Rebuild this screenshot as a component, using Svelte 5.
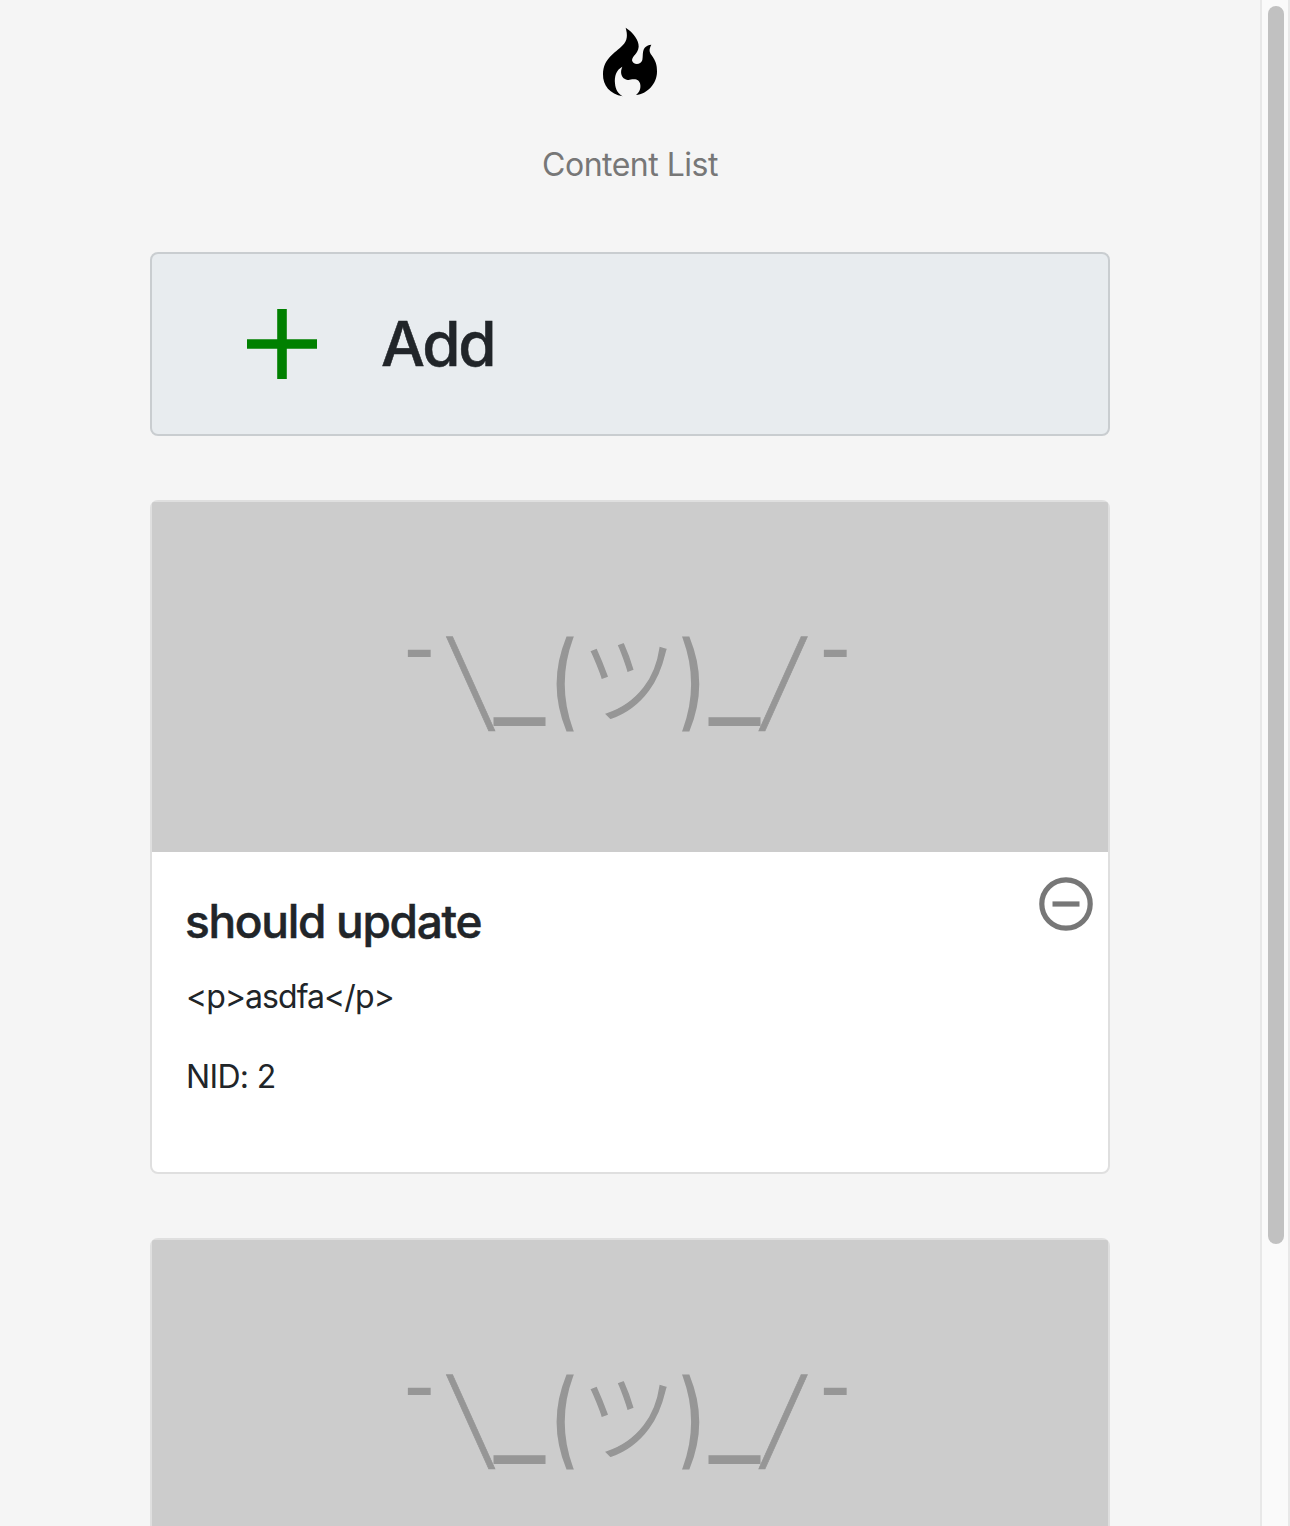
<script>
  const cards = [
    { title: 'should update', body: '<p>asdfa</p>', nid: 2 },
    {},
  ];

  // Each glyph of the placeholder: baseline origin, slant, scale and family class
  const glyphs = [
    { ch: '¯', x: 247.7, y: 221.8, skew: 0, sx: 0.78, sy: 1, face: 'sans' },
    { ch: '\\', x: 315, y: 218, skew: 13.9, sx: 0.75, sy: 1.14, face: 'sans slash' },
    { ch: '_', x: 342.5, y: 195, skew: 0, sx: 1, sy: 1.25, face: 'sans' },
    { ch: '(', x: 399.9, y: 214.5, skew: 0, sx: 0.65, sy: 1.035, face: 'sans heavy' },
    { ch: 'ツ', x: 428.3, y: 213.5, skew: 0, sx: 0.97, sy: 0.98, face: 'cjk' },
    { ch: ')', x: 526.6, y: 214.5, skew: 0, sx: 0.65, sy: 1.035, face: 'sans heavy' },
    { ch: '_', x: 557.5, y: 195, skew: 0, sx: 1, sy: 1.25, face: 'sans' },
    { ch: '/', x: 609.5, y: 218, skew: -13.9, sx: 0.75, sy: 1.14, face: 'sans slash' },
    { ch: '¯', x: 663.7, y: 221.8, skew: 0, sx: 0.78, sy: 1, face: 'sans' },
  ];
</script>

<div class="page">
  <main>
    <header>
      <svg class="flame" viewBox="0 0 240 255" aria-hidden="true">
        <path d="M107 23C130 37 147 61 146 80C144 102 127 106 126 121C128 135 152 137 157 120C161 104 152 78 184 74C176 90 178 96 185 106C198 125 201 135 201 155C201 190 172 222 138 225C150 215 152 205 151 195C150 182 140 177 130 178C122 178 115 183 105 177C93 171 90 155 97 140C78 150 73 170 75 190C76 208 85 222 98 229C60 224 38 195 39 163C40 115 75 100 98 76C113 60 113 45 107 23Z" />
      </svg>
      <p>Content List</p>
    </header>

    <button class="add">
      <svg viewBox="0 0 70 70" aria-hidden="true"><path d="M30.2 0h9.6v30.2H70v9.6H39.8V70h-9.6V39.8H0v-9.6h30.2z" /></svg>
      <span>Add</span>
    </button>

    {#each cards as card}
      <article>
        <svg class="placeholder" viewBox="0 0 956 350">
          <g class="shrug">
            {#each glyphs as g}
              <text class={g.face} transform="translate({g.x} {g.y}) skewX({g.skew}) scale({g.sx} {g.sy})">{g.ch}</text>
            {/each}
          </g>
        </svg>
        {#if card.title}
          <div class="body">
            <div class="copy">
              <h2>{card.title}</h2>
              <p class="markup">{card.body}</p>
              <p>NID: {card.nid}</p>
            </div>
            <svg class="remove" viewBox="0 0 54 54" aria-hidden="true">
              <circle cx="27" cy="27" r="24.2" />
              <path d="M13.5 27h27" />
            </svg>
          </div>
        {/if}
      </article>
    {/each}
  </main>
  <aside><div class="thumb"></div></aside>
</div>

<style>
  :global(body) { background: #f5f5f5; overflow: hidden; }
  .page {
    display: flex;
    height: 1526px;
    overflow: hidden;
    background: #f5f5f5;
    color: #212529;
    font-family: Inter, "Liberation Sans", sans-serif;
    font-size: 32px;
    line-height: 48px;
  }
  main {
    flex: 1;
    display: flex;
    flex-direction: column;
    align-items: center;
    gap: 64px;
  }
  main > * { flex-shrink: 0; box-sizing: border-box; width: 960px; }
  header {
    height: 188px;
    padding-top: 20px;
    display: flex;
    flex-direction: column;
    align-items: center;
    gap: 36px;
  }
  .flame { width: 80px; height: 85px; flex-shrink: 0; }
  header p { margin: 0; color: #777; letter-spacing: -0.5px; }
  .add {
    height: 184px;
    padding: 0 95px;
    display: flex;
    align-items: center;
    gap: 64px;
    border: 2px solid #c9cdd0;
    border-radius: 8px;
    background: #e8ecef;
    color: inherit;
    font: 500 62px/1 Inter, "Liberation Sans", sans-serif;
    letter-spacing: -2.3px;
    -webkit-text-stroke: 0.5px;
  }
  .add svg { width: 70px; height: 70px; fill: #008000; }
  article {
    height: 674px;
    border: 2px solid #dfdfdf;
    border-radius: 8px;
    background: #fff;
  }
  .placeholder {
    display: block;
    width: 956px;
    height: 350px;
    border-radius: 2px 2px 0 0;
    background: #ccc;
    fill: #969696;
    font-size: 100px;
  }
  .shrug { stroke: #969696; stroke-width: 0; filter: blur(0.6px); }
  .sans { font-family: "DejaVu Sans", sans-serif; }
  .heavy { stroke-width: 3px; }
  .slash { stroke-width: 1px; }
  .cjk { font-family: "Noto Sans CJK JP", sans-serif; font-weight: 300; stroke-width: 1.4px; }
  .body { display: flex; justify-content: space-between; padding: 25px 15px 0 34px; }
  .copy { padding-top: 16px; }
  h2 {
    margin: 0 0 24px -1px;
    font-size: 46px;
    line-height: 56px;
    font-weight: 500;
    letter-spacing: -1.3px;
    -webkit-text-stroke: 0.5px;
  }
  .copy p { margin: 0 0 32px; letter-spacing: -0.65px; }
  .copy .markup { letter-spacing: -0.95px; }
  .remove { width: 54px; height: 54px; fill: none; stroke: #777; stroke-width: 5.2; }
  aside {
    box-sizing: border-box;
    width: 30px;
    padding: 6px 4px 0 6px;
    border: solid #e8e8e8;
    border-width: 0 2px;
    background: #fafafa;
  }
  .thumb { width: 16px; height: 1238px; border-radius: 8px; background: #c1c1c1; }
</style>
